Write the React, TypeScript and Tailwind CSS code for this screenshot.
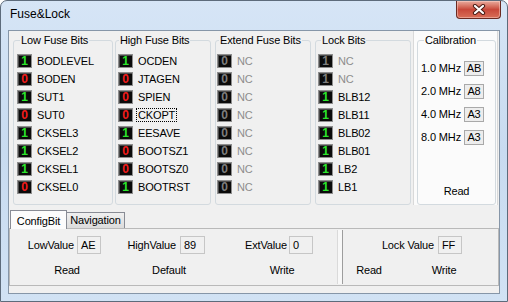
import React from "react"

type Bit = { v: "0" | "1"; name: string; off?: boolean; focus?: boolean }

const low: Bit[] = [
  { v: "1", name: "BODLEVEL" },
  { v: "0", name: "BODEN" },
  { v: "1", name: "SUT1" },
  { v: "0", name: "SUT0" },
  { v: "1", name: "CKSEL3" },
  { v: "1", name: "CKSEL2" },
  { v: "1", name: "CKSEL1" },
  { v: "0", name: "CKSEL0" },
]

const high: Bit[] = [
  { v: "1", name: "OCDEN" },
  { v: "0", name: "JTAGEN" },
  { v: "0", name: "SPIEN" },
  { v: "0", name: "CKOPT", focus: true },
  { v: "1", name: "EESAVE" },
  { v: "0", name: "BOOTSZ1" },
  { v: "0", name: "BOOTSZ0" },
  { v: "1", name: "BOOTRST" },
]

const ext: Bit[] = Array.from({ length: 8 }, () => ({
  v: "0" as const,
  name: "NC",
  off: true,
}))

const lock: Bit[] = [
  { v: "1", name: "NC", off: true },
  { v: "1", name: "NC", off: true },
  { v: "1", name: "BLB12" },
  { v: "1", name: "BLB11" },
  { v: "1", name: "BLB02" },
  { v: "1", name: "BLB01" },
  { v: "1", name: "LB2" },
  { v: "1", name: "LB1" },
]

const calib = [
  ["1.0 MHz", "AB"],
  ["2.0 MHz", "A8"],
  ["4.0 MHz", "A3"],
  ["8.0 MHz", "A3"],
]

const BitRow = ({ bit, boxGap }: { bit: Bit; boxGap: string }) => {
  const digit = bit.off
    ? "text-[#7d7d7d]"
    : bit.v === "1"
      ? "text-[#2be62b]"
      : "text-[#f21c1c]"
  return (
    <div className="flex h-[18px] items-center">
      <div
        className={`flex h-[14px] w-[15px] items-center justify-center border border-[#8e8e8e] bg-[#0b0b0b] text-[12px] leading-none font-bold shadow-[inset_1px_1px_0_#4a4a4a] ${boxGap} ${digit}`}
      >
        {bit.v}
      </div>
      <span
        className={
          bit.focus
            ? "ml-[4px] px-[1px] leading-[12px] outline-1 outline-dotted outline-black"
            : bit.off
              ? "ml-[5px] text-[#8d8d8d]"
              : "ml-[5px]"
        }
      >
        {bit.name}
      </span>
    </div>
  )
}

const Group = ({
  title,
  bits,
  className,
  legend,
  boxGap,
}: {
  title: string
  bits: Bit[]
  className: string
  legend: string
  boxGap: string
}) => (
  <fieldset
    className={`h-[171px] rounded-[3px] border border-[#d3dadf] ${className}`}
  >
    <legend className={`px-[1px] leading-[13px] ${legend}`}>{title}</legend>
    <div className="flex flex-col pt-[5px]">
      {bits.map((b, i) => (
        <BitRow key={i} bit={b} boxGap={boxGap} />
      ))}
    </div>
  </fieldset>
)

const ValueBox = ({ value, className }: { value: string; className: string }) => (
  <div
    className={`flex h-[18px] items-center border border-[#c6c6c6] bg-[#f0f0f0] pl-[3px] ${className}`}
  >
    {value}
  </div>
)

export default function App() {
  return (
    <div className="h-[302px] w-[508px] overflow-hidden bg-white font-['Liberation_Sans',sans-serif] text-[11px] tracking-[-0.15px] text-black">
      <div className="flex h-[302px] w-[508px] flex-col rounded-t-[7px] border border-[#5d6b7b] bg-gradient-to-b from-[#d6e5f6] via-[#c8dbf0] to-[#d1e2f4]">
        {/* title bar */}
        <div className="flex h-[29px] items-start justify-between">
          <span className="pt-[6px] pl-[9px] text-[12px] leading-[15px] tracking-normal">
            Fuse&amp;Lock
          </span>
          <div className="mr-[6px] flex h-[18px] w-[45px] items-center justify-center rounded-b-[4px] border border-t-0 border-[#6a2a22] bg-gradient-to-b from-[#e8ab9e] via-[#c8483a] to-[#d86e58] shadow-[inset_0_0_0_1px_rgba(255,220,210,0.45)]">
            <svg width="14" height="11" viewBox="0 0 14 11">
              <path
                d="M3 2 L11 9 M11 2 L3 9"
                stroke="#4a1c15"
                strokeWidth="4.2"
                strokeLinecap="round"
              />
              <path
                d="M3 2 L11 9 M11 2 L3 9"
                stroke="#ffffff"
                strokeWidth="2.2"
                strokeLinecap="round"
              />
            </svg>
          </div>
        </div>

        {/* client area */}
        <div className="mx-[7px] flex h-[264px] flex-col border border-[#8696a8] bg-[#f0f0f0]">
          {/* fuse groups */}
          <div className="flex h-[174px] items-start">
            <Group
              title="Low Fuse Bits"
              bits={low}
              className="mt-[3px] ml-[4px] w-[100px]"
              legend="ml-[6px]"
              boxGap="ml-[3px]"
            />
            <Group
              title="High Fuse Bits"
              bits={high}
              className="mt-[3px] ml-[2px] w-[96px]"
              legend="ml-[3px]"
              boxGap="ml-[2px]"
            />
            <Group
              title="Extend Fuse Bits"
              bits={ext}
              className="mt-[3px] ml-[4px] w-[96px]"
              legend="ml-[3px]"
              boxGap="ml-[1px]"
            />
            <Group
              title="Lock Bits"
              bits={lock}
              className="mt-[3px] ml-[4px] w-[96px]"
              legend="ml-[5px]"
              boxGap="ml-[2px]"
            />
            <div className="ml-[2px] flex h-[174px] w-[85px] border-x border-[#d9d9d9] bg-[#fbfbfb]">
              <fieldset className="mt-[3px] ml-[3px] flex h-[171px] w-[79px] flex-col rounded-[3px] border border-[#d3dadf]">
                <legend className="ml-[6px] px-[1px] leading-[13px]">
                  Calibration
                </legend>
                <div className="flex flex-col gap-[8px] pt-[14px]">
                  {calib.map(([f, v]) => (
                    <div
                      key={f}
                      className="flex h-[15px] items-center justify-end pr-[11px]"
                    >
                      <span>{f}</span>
                      <div className="ml-[3px] flex h-[15px] w-[20px] items-center justify-center border border-[#a9a9a9] bg-[#ededed]">
                        {v}
                      </div>
                    </div>
                  ))}
                </div>
                <div className="mt-auto pb-[5px] text-center">Read</div>
              </fieldset>
            </div>
          </div>

          {/* tabs */}
          <div className="flex h-[23px] items-end pl-[1px]">
            <div className="relative z-10 mb-[-1px] flex h-[19px] w-[57px] items-center justify-center border border-b-0 border-[#898c95] bg-[#fcfcfc] pt-[2px]">
              ConfigBit
            </div>
            <div className="flex h-[16px] w-[58px] items-center justify-center border border-l-0 border-b-0 border-[#898c95] bg-gradient-to-b from-[#f0f0f0] to-[#dcdcdc]">
              Navigation
            </div>
          </div>

          {/* tab page */}
          <div className="flex h-[58px] border border-[#b9b9b9] bg-[#f0f0f0]">
            <div className="flex w-[327px] flex-col">
              <div className="mt-[7px] flex h-[18px] items-center">
                <span className="w-[64px] text-right">LowValue</span>
                <ValueBox value="AE" className="ml-[3px] w-[24px]" />
                <span className="w-[75px] text-right">HighValue</span>
                <ValueBox value="89" className="ml-[4px] w-[25px]" />
                <span className="w-[82px] text-right">ExtValue</span>
                <ValueBox value="0" className="ml-[2px] w-[24px]" />
              </div>
              <div className="mt-[9px] flex h-[14px] items-center">
                <span className="ml-[27px] w-[60px] text-center">Read</span>
                <span className="ml-[42px] w-[60px] text-center">Default</span>
                <span className="ml-[53px] w-[60px] text-center">Write</span>
              </div>
            </div>
            <div className="my-[1px] w-[6px] border-x border-l-[#dadada] border-r-[#9d9d9d] bg-[#f8f8f8]" />
            <div className="flex flex-1 flex-col">
              <div className="mt-[7px] flex h-[18px] items-center">
                <span className="w-[91px] text-right">Lock Value</span>
                <ValueBox value="FF" className="ml-[4px] w-[24px]" />
              </div>
              <div className="mt-[9px] flex h-[14px] items-center">
                <span className="w-[52px] text-center">Read</span>
                <span className="ml-[23px] w-[52px] text-center">Write</span>
              </div>
            </div>
          </div>
        </div>
      </div>
    </div>
  )
}
